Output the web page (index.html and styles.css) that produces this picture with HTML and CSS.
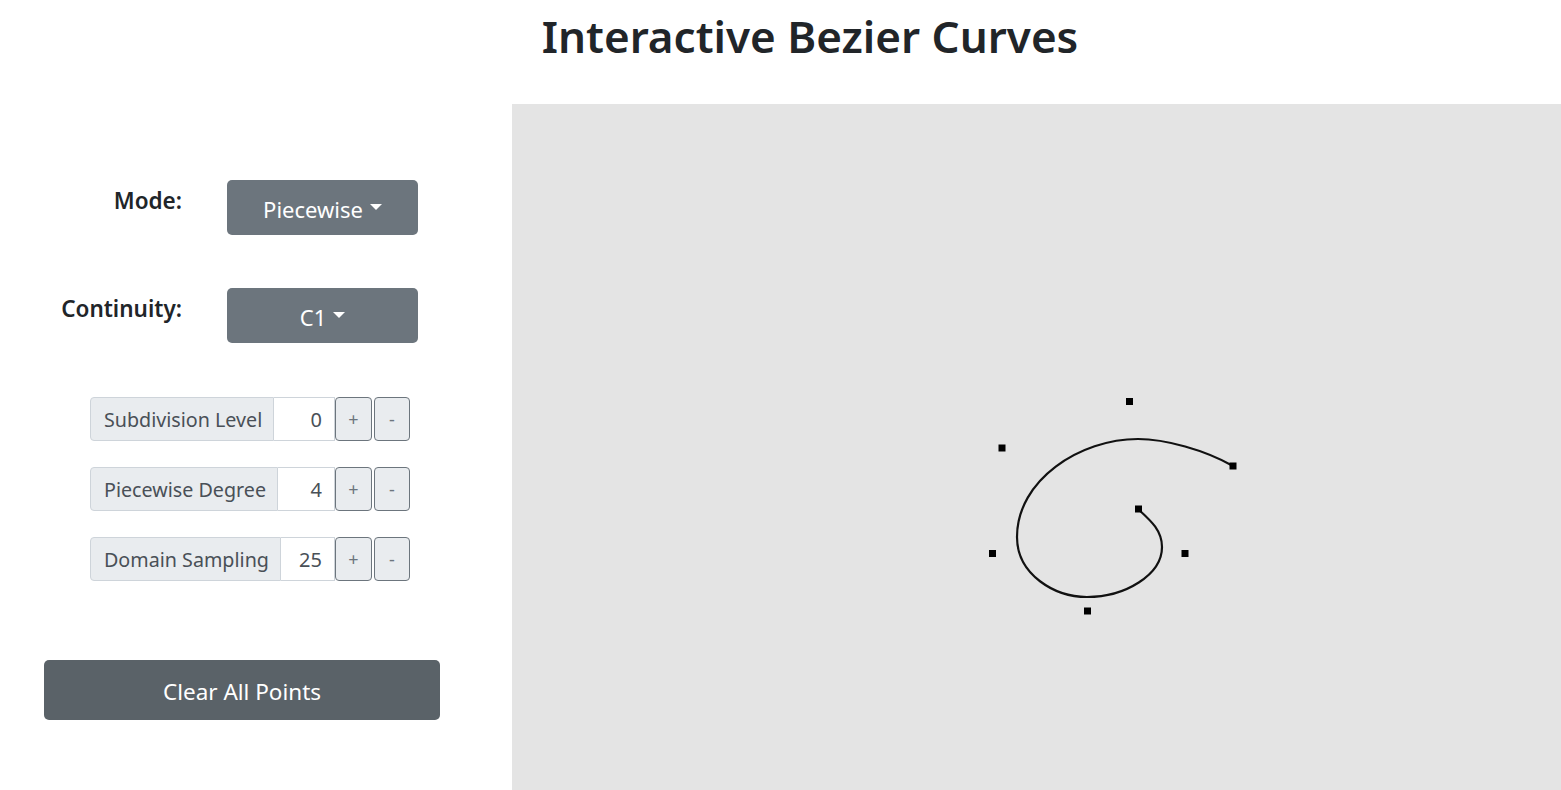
FILE: index.html
```html
<!DOCTYPE html>
<html lang="en">
<head>
<meta charset="utf-8">
<title>Interactive Bezier Curves</title>
<link rel="stylesheet" href="styles.css">
</head>
<body>
<h1 class="title">Interactive Bezier Curves</h1>
<div class="main">
  <aside class="sidebar">
    <div class="field-row">
      <label class="field-label">Mode:</label>
      <button class="dropdown-btn">Piecewise<span class="caret"></span></button>
    </div>
    <div class="field-row row-gap">
      <label class="field-label">Continuity:</label>
      <button class="dropdown-btn">C1<span class="caret"></span></button>
    </div>
    <div class="input-group first">
      <span class="ig-label">Subdivision Level</span>
      <input class="ig-input" type="text" value="0">
      <button class="ig-btn">+</button>
      <button class="ig-btn">-</button>
    </div>
    <div class="input-group">
      <span class="ig-label">Piecewise Degree</span>
      <input class="ig-input" type="text" value="4">
      <button class="ig-btn">+</button>
      <button class="ig-btn">-</button>
    </div>
    <div class="input-group">
      <span class="ig-label">Domain Sampling</span>
      <input class="ig-input" type="text" value="25">
      <button class="ig-btn">+</button>
      <button class="ig-btn">-</button>
    </div>
    <button class="clear-btn">Clear All Points</button>
  </aside>
  <section class="canvas">
    <svg class="curve-svg" width="1049" height="686" viewBox="0 0 1049 686">
      <path d="M721,362 C693,346 653,335 626,335 C568,335 505,376 505,433 C505,471 543,493 575,493 C613,493 650,471 650,443 C650,426 638,416 626,405" fill="none" stroke="#111" stroke-width="2.2"/>
      <rect x="614" y="294" width="7" height="7" fill="#000"/>
      <rect x="486.5" y="340.5" width="7" height="7" fill="#000"/>
      <rect x="717.5" y="358.5" width="7" height="7" fill="#000"/>
      <rect x="623" y="401.5" width="7" height="7" fill="#000"/>
      <rect x="477" y="446" width="7" height="7" fill="#000"/>
      <rect x="669.5" y="446" width="7" height="7" fill="#000"/>
      <rect x="572" y="503.5" width="7" height="7" fill="#000"/>
    </svg>
  </section>
</div>
</body>
</html>
```

FILE: styles.css
```css
* { box-sizing: border-box; }

html, body {
  margin: 0;
  padding: 0;
  overflow: hidden;
}

body {
  font-family: "Noto Sans", "Open Sans", sans-serif;
  color: #212529;
  background: #fff;
}

.title {
  margin: 0;
  height: 104px;
  padding: 3px 0 0 59px;
  text-align: center;
  font-size: 44px;
  font-weight: 600;
  line-height: 66px;
  color: #212529;
}

.main {
  display: flex;
  align-items: flex-start;
}

.sidebar {
  width: 512px;
  flex: none;
  display: flex;
  flex-direction: column;
  padding-top: 76px;
}

.field-row {
  display: grid;
  grid-template-columns: 182px 191px;
  column-gap: 45px;
  align-items: start;
}

.row-gap {
  margin-top: 53px;
}

.field-label {
  justify-self: end;
  font-size: 22.5px;
  font-weight: 600;
  line-height: 30px;
  padding-top: 6px;
  color: #212529;
}

.dropdown-btn {
  height: 55px;
  background: #6c757d;
  color: #fff;
  border: none;
  border-radius: 5px;
  font-family: inherit;
  font-size: 22px;
  display: flex;
  align-items: center;
  justify-content: center;
  padding: 2px 0 0;
}

.caret {
  display: inline-block;
  width: 0;
  height: 0;
  margin-left: 7px;
  margin-top: -3px;
  border-top: 6px solid #fff;
  border-left: 6px solid transparent;
  border-right: 6px solid transparent;
}

.input-group {
  display: flex;
  width: 320px;
  height: 44px;
  margin-left: 90px;
  margin-top: 26px;
}

.input-group.first {
  margin-top: 54px;
}

.ig-label {
  display: flex;
  align-items: center;
  padding: 0 11px 0 13px;
  background: #e9ecef;
  border: 1px solid #ced4da;
  border-radius: 4px 0 0 4px;
  color: #495057;
  font-size: 19.7px;
  white-space: nowrap;
}

.ig-input {
  flex: 1;
  min-width: 0;
  border: 1px solid #ced4da;
  border-left: none;
  border-radius: 0;
  background: #fff;
  text-align: right;
  padding: 0 12px 0 0;
  font-family: inherit;
  font-size: 20px;
  color: #495057;
  outline: none;
}

.ig-btn {
  width: 37px;
  flex: none;
  border: 1px solid #6c757d;
  border-radius: 4px;
  background: #e9ecef;
  color: #6c757d;
  font-family: inherit;
  font-size: 18px;
  padding: 0;
}

.ig-btn + .ig-btn {
  margin-left: 2px;
  width: 36px;
}

.clear-btn {
  margin: 79px 0 0 44px;
  width: 396px;
  height: 60px;
  background: #5a6268;
  color: #fff;
  border: none;
  border-radius: 5px;
  font-family: inherit;
  font-size: 22.5px;
  padding: 3px 0 0;
}

.canvas {
  flex: 1;
  height: 686px;
  background: #e4e4e4;
}

.curve-svg {
  display: block;
}
```
